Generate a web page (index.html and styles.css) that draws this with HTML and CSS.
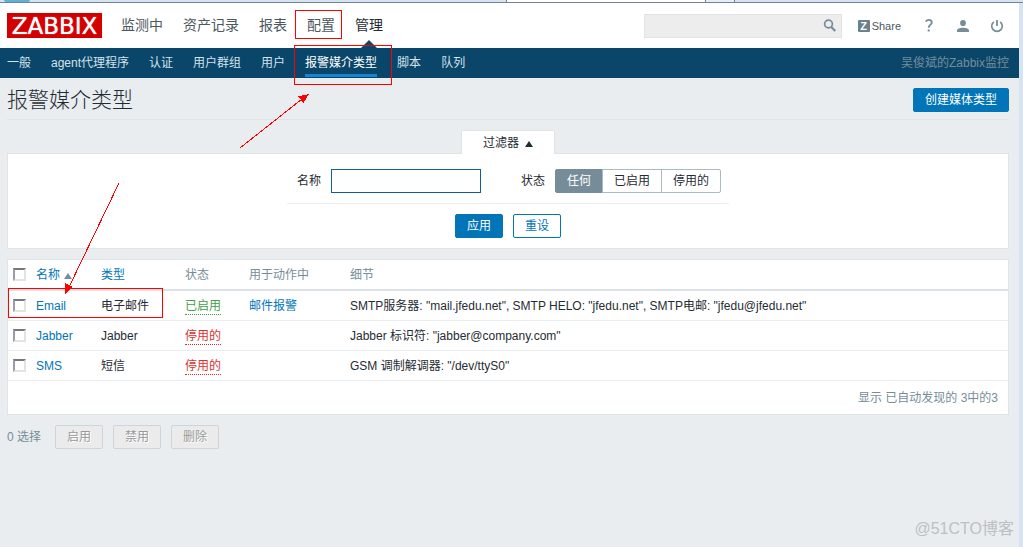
FILE: index.html
```html
<!DOCTYPE html>
<html lang="zh-CN">
<head>
<meta charset="utf-8">
<title>报警媒介类型</title>
<link rel="stylesheet" href="styles.css">
</head>
<body>
<div class="browser-edge"><span class="orb"></span><span class="tab-active"></span><span class="tab-new"></span></div>
<div class="app">
  <header class="top">
    <a class="logo" href="#">ZABBIX</a>
    <nav class="main-nav">
      <a href="#">监测中</a><a href="#">资产记录</a><a href="#">报表</a><a href="#">配置</a><a href="#" class="selected">管理</a>
    </nav>
    <form class="search">
      <input type="text" aria-label="搜索">
      <button type="button" aria-label="搜索"><svg width="14" height="14" viewBox="0 0 14 14"><circle cx="5.5" cy="5" r="3.9" fill="none" stroke="#768d99" stroke-width="1.7"/><path d="M8.3 8L12.3 12" stroke="#768d99" stroke-width="2.2"/></svg></button>
    </form>
    <a class="share" href="#"><span class="share-z">Z</span>Share</a>
    <a class="icon help" href="#" aria-label="帮助"><svg width="12" height="16" viewBox="0 0 12 16"><path d="M3 3.8C3.3 2.4 4.4 1.8 5.8 1.8C7.6 1.8 8.8 2.8 8.8 4.4C8.8 6.6 5.7 6.8 5.7 9.8" fill="none" stroke="#768d99" stroke-width="1.8"/><rect x="4.700" y="11.500" width="2" height="2" fill="#768d99"/></svg></a>
    <a class="icon user" href="#" aria-label="用户资料"><svg width="14" height="14" viewBox="0 0 14 14"><ellipse cx="7" cy="4" rx="2.900" ry="3.100" fill="#768d99"/><path d="M1 13V11.400C1 9.600 4.500 8.800 7 8.800S13 9.600 13 11.400V13Z" fill="#768d99"/></svg></a>
    <a class="icon" href="#" aria-label="退出"><svg width="14" height="14" viewBox="0 0 14 14"><path d="M3.900 2.800A5.300 5.300 0 1 0 10.100 2.800" fill="none" stroke="#768d99" stroke-width="1.600"/><path d="M7 1V7" stroke="#768d99" stroke-width="1.800"/></svg></a>
  </header>
  <nav class="sub-nav">
    <a href="#">一般</a><a href="#">agent代理程序</a><a href="#">认证</a><a href="#">用户群组</a><a href="#">用户</a><a href="#" class="selected">报警媒介类型</a><a href="#">脚本</a><a href="#">队列</a>
    <span class="server-name">吴俊斌的Zabbix监控</span>
  </nav>
  <main>
    <div class="title-bar">
      <h1>报警媒介类型</h1>
      <button type="button" class="btn primary">创建媒体类型</button>
    </div>
    <button type="button" class="filter-tab">过滤器<span class="arrow-up"></span></button>
    <form class="filter">
      <div class="filter-fields">
        <label for="name">名称</label>
        <input type="text" id="name" class="name-input">
        <span class="status-label" id="status">状态</span>
        <div class="segments" role="radiogroup" aria-labelledby="status">
          <input type="radio" name="st" id="any" checked><label for="any">任何</label><input type="radio" name="st" id="on"><label for="on">已启用</label><input type="radio" name="st" id="off"><label for="off">停用的</label>
        </div>
      </div>
      <div class="filter-buttons">
        <button type="button" class="btn primary">应用</button>
        <button type="button" class="btn">重设</button>
      </div>
    </form>
    <section class="list">
      <table>
        <colgroup><col class="c-check"><col class="c-name"><col class="c-type"><col class="c-status"><col class="c-used"><col></colgroup>
        <thead>
          <tr><th><input type="checkbox" aria-label="全选"></th><th><a href="#">名称<span class="arrow-up sort"></span></a></th><th><a href="#">类型</a></th><th>状态</th><th>用于动作中</th><th>细节</th></tr>
        </thead>
        <tbody>
          <tr><td><input type="checkbox" aria-label="Email"></td><td><a href="#">Email</a></td><td>电子邮件</td><td><a href="#" class="enabled">已启用</a></td><td><a href="#">邮件报警</a></td><td>SMTP服务器: "mail.jfedu.net", SMTP HELO: "jfedu.net", SMTP电邮: "jfedu@jfedu.net"</td></tr>
          <tr><td><input type="checkbox" aria-label="Jabber"></td><td><a href="#">Jabber</a></td><td>Jabber</td><td><a href="#" class="disabled">停用的</a></td><td></td><td>Jabber 标识符: "jabber@company.com"</td></tr>
          <tr><td><input type="checkbox" aria-label="SMS"></td><td><a href="#">SMS</a></td><td>短信</td><td><a href="#" class="disabled">停用的</a></td><td></td><td>GSM 调制解调器: "/dev/ttyS0"</td></tr>
        </tbody>
      </table>
      <div class="list-total">显示 已自动发现的 3中的3</div>
    </section>
    <div class="actions">
      <span class="count">0 选择</span>
      <button type="button" class="btn" disabled>启用</button>
      <button type="button" class="btn" disabled>禁用</button>
      <button type="button" class="btn" disabled>删除</button>
    </div>
  </main>
</div>
<svg class="marks" width="400" height="330" viewBox="0 0 400 330" shape-rendering="crispEdges">
  <g fill="none" stroke="#f00">
    <rect x="295.5" y="10.5" width="46" height="28"/>
    <rect x="294.5" y="45.5" width="97" height="39"/>
    <rect x="8.5" y="288.5" width="154" height="29"/>
    <path d="M240 148L302 99M119 183L70 285"/>
  </g>
  <path d="M309 94L298 96.500L303.500 103ZM65.500 294L65 283L73 287Z" fill="#f00"/>
</svg>
<div class="watermark">@51CTO博客</div>
</body>
</html>
```

FILE: styles.css
```css
* { box-sizing: border-box; }
body {
  margin: 0;
  min-height: 100vh;
  display: flex;
  flex-direction: column;
  position: relative;
  background: #d6e4f2;
  color: #1f2c33;
  font: 12px/18px "Liberation Sans", "Noto Sans CJK SC", sans-serif;
}
a { color: #0275b8; text-decoration: none; }
button, input { font: inherit; margin: 0; }

.browser-edge {
  display: flex;
  height: 3px;
  padding-left: 4px;
  border-bottom: 1px solid #71839a;
}
.orb { width: 26px; background: #5fb0d8; border-radius: 0 0 6px 6px; }
.tab-active {
  width: 200px;
  margin-left: 476px;
  background: #fff;
  border: solid #71839a;
  border-width: 0 1px;
}
.tab-new { width: 29px; background: #e4eef8; border-right: 1px solid #71839a; }

.app { flex: 1; margin-right: 4px; background: #e9edf0; }

.top {
  display: flex;
  align-items: center;
  height: 45px;
  padding: 0 15px 0 7px;
  background: #fff;
}
.logo {
  width: 95px;
  height: 25px;
  background: #d40000;
  color: #fff;
  font: 23px/26px "DejaVu Sans", sans-serif;
  text-align: center;
  text-shadow: 0 0 1px #fff;
}
.main-nav { display: flex; gap: 20px; margin-left: 19px; font-size: 14px; line-height: 45px; }
.main-nav a { color: #4c5860; }
.main-nav .selected { position: relative; color: #1f2c33; }
.main-nav .selected::after {
  content: "";
  position: absolute;
  left: 50%;
  bottom: 0;
  margin-left: -8px;
  border: 8px solid transparent;
  border-top: 0;
  border-bottom-color: #0a466a;
}
.search {
  display: flex;
  width: 198px;
  height: 24px;
  margin-left: auto;
  background: #ededed;
  border: 1px solid #e3e3e3;
}
.search input { flex: 1; min-width: 0; border: 0; background: none; }
.search button { display: flex; align-items: center; padding: 0 4px; border: 0; background: none; }
.share { display: flex; align-items: center; gap: 2px; margin-left: 16px; color: #4c5860; font-size: 11px; }
.share-z {
  width: 12px;
  height: 12px;
  background: #69808d;
  border-radius: 1px;
  color: #fff;
  font-weight: bold;
  line-height: 12px;
  text-align: center;
}
.icon { display: flex; margin-left: 20px; }
.help { margin-left: 22px; }
.user { margin-left: 21px; }

.sub-nav {
  display: flex;
  gap: 20px;
  height: 30px;
  padding: 0 10px 0 7px;
  background: #0a466a;
  line-height: 26px;
}
.sub-nav a { height: 29px; padding-top: 2px; color: #d5e3ec; }
.sub-nav .selected { color: #fff; border-bottom: 3px solid #1684d0; }
.server-name { margin-left: auto; padding-top: 2px; color: #768d99; }

main { padding: 0 10px 0 7px; }
.title-bar {
  display: flex;
  align-items: center;
  justify-content: space-between;
  height: 42px;
  padding-top: 2px;
  border-bottom: 1px solid #dfe4e7;
}
h1 { margin: 0; font-size: 21px; font-weight: 300; line-height: 30px; color: #1f2c33; }

.btn {
  min-width: 48px;
  height: 24px;
  padding: 0 11px;
  border: 1px solid #0275b8;
  border-radius: 2px;
  background: #fff;
  color: #0275b8;
  line-height: 22px;
}
.btn.primary { background: #0275b8; color: #fff; }
.btn:disabled {
  background: #ebebeb;
  border-color: #ccd5d9;
  color: #999;
  text-shadow: 1px 1px 0 #fff;
}

.filter-tab {
  display: block;
  position: relative;
  width: 94px;
  height: 24px;
  margin: 10px auto -1px;
  padding: 0;
  background: #fff;
  border: 1px solid #dfe4e7;
  border-bottom: 0;
  border-radius: 2px 2px 0 0;
  color: #1f2c33;
}
.arrow-up {
  display: inline-block;
  margin-left: 6px;
  border: 4px solid transparent;
  border-top: 0;
  border-bottom: 6px solid #1f2c33;
}
.filter { padding: 15px 0 10px; background: #fff; border: 1px solid #dfe4e7; }
.filter-fields {
  display: flex;
  align-items: center;
  width: max-content;
  margin: 0 auto;
  padding: 0 8px 10px 10px;
  border-bottom: 1px solid #ebeef0;
}
.name-input { width: 150px; height: 24px; margin-left: 10px; border: 1px solid #0f5f93; background: #fff; }
.status-label { margin-left: 40px; }
.segments { display: flex; margin-left: 10px; }
.segments input { position: absolute; opacity: 0; }
.segments label {
  height: 24px;
  padding: 0 11px;
  margin-right: -1px;
  border: 1px solid #acbbc2;
  line-height: 22px;
}
.segments label:last-child { margin-right: 0; border-radius: 0 2px 2px 0; }
.segments label:first-of-type { border-radius: 2px 0 0 2px; }
.segments input:checked + label { background: #768d99; border-color: #768d99; color: #fff; }
.filter-buttons { display: flex; justify-content: center; gap: 10px; padding-top: 10px; }

.list { margin-top: 10px; background: #fff; border: 1px solid #dfe4e7; }
table { width: 100%; table-layout: fixed; border-collapse: separate; border-spacing: 0; }
.c-check { width: 23px; }
.c-name { width: 65px; }
.c-type { width: 84px; }
.c-status { width: 64px; }
.c-used { width: 101px; }
th, td { height: 30px; padding: 0 5px; text-align: left; white-space: nowrap; }
td { border-bottom: 1px solid #ebeef0; }
th { height: 31px; border-bottom: 2px solid #dce2e5; color: #768d99; font-weight: normal; }
.sort { margin-left: 4px; border-bottom-color: #768d99; }
input[type="checkbox"] {
  display: block;
  appearance: none;
  width: 13px;
  height: 13px;
  background: #fff;
  border: 2px solid #e3e3e3;
  border-top-color: #77767a;
  border-left-color: #9b9cae;
}
.enabled, .disabled { display: inline-block; line-height: 15px; border-bottom: 1px dotted; }
.enabled { color: #429e47; }
.disabled { color: #dc3030; }
.list-total { padding: 1px 10px 0; line-height: 32px; text-align: right; color: #768d99; }

.actions { display: flex; align-items: center; gap: 10px; margin-top: 10px; }
.count { margin-right: 4px; color: #768d99; }

.marks { position: absolute; left: 0; top: 0; pointer-events: none; }
.watermark {
  position: absolute;
  right: 9px;
  bottom: 8px;
  color: #bcc0c3;
  font-size: 16px;
  line-height: 20px;
}
```
